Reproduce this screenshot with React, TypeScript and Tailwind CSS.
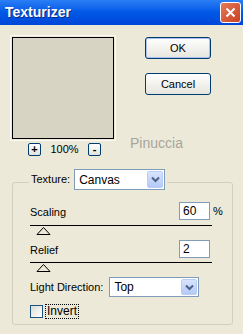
import React from 'react';

function ChevronDown() {
  return (
    <svg width="9" height="7" viewBox="0 0 9 7" aria-hidden="true">
      <path d="M1 1.5 L4.5 5 L8 1.5" fill="none" stroke="#4d6185" strokeWidth="2" />
    </svg>
  );
}

function Combo({ value, width, height }: { value: string; width: string; height: string }) {
  return (
    <div className={`${width} ${height} bg-white border border-[#7f9db9] flex items-center justify-between p-[1px]`}>
      <span className="pl-[3px] text-[12px] leading-none">{value}</span>
      <div className="w-[16px] h-full rounded-[2px] bg-gradient-to-b from-[#d8e4fd] to-[#b3c9f7] border border-[#b9cdf7] flex items-center justify-center">
        <ChevronDown />
      </div>
    </div>
  );
}

function Slider() {
  return (
    <div className="mt-[4px]">
      <div className="w-[182px] h-[1px] bg-black" />
      <svg width="15" height="9" viewBox="0 0 15 9" className="ml-[6px] mt-[1px] block" aria-hidden="true">
        <polygon points="7.5,0.5 14,7.5 1,7.5" fill="#ece9d8" stroke="#000" strokeWidth="1" />
      </svg>
    </div>
  );
}

function ZoomButton({ sign }: { sign: string }) {
  return (
    <div className="w-[13px] h-[13px] rounded-[2px] border border-[#003c74] bg-gradient-to-b from-white to-[#e3e2da] flex items-center justify-center text-[11px] leading-none font-bold">
      {sign}
    </div>
  );
}

export default function App() {
  return (
    <div className="w-[243px] h-[334px] bg-[#ece9d8] overflow-hidden text-[11px] text-black font-['Liberation_Sans',Arial,sans-serif]">
      {/* Title bar */}
      <div className="h-[25px] flex items-center justify-between pl-[5px] pr-[2px] bg-gradient-to-b from-[#2a7ef5] via-[#0058e6] to-[#0046d9]">
        <span className="text-white font-bold text-[14px] [text-shadow:1px_1px_0_#0a2b8a]">Texturizer</span>
        <div className="w-[21px] h-[21px] rounded-[3px] border border-white bg-gradient-to-br from-[#e6775a] to-[#c9401c] flex items-center justify-center">
          <svg width="11" height="11" viewBox="0 0 11 11" aria-hidden="true">
            <path d="M1.5 1.5 L9.5 9.5 M9.5 1.5 L1.5 9.5" stroke="white" strokeWidth="2" />
          </svg>
        </div>
      </div>

      <div className="px-[12px]">
        <div className="flex">
          {/* Preview */}
          <div className="w-[102px] flex flex-col">
            <div className="mt-[12px] w-[102px] h-[102px] border border-black bg-[#d7d4c4] outline outline-1 outline-offset-1 outline-[#faf9f4]" />
            <div className="mt-[4px] flex items-center">
              <div className="ml-[16px]"><ZoomButton sign="+" /></div>
              <span className="w-[47px] text-center text-[11px] leading-none">100%</span>
              <ZoomButton sign="-" />
            </div>
          </div>

          {/* Buttons */}
          <div className="ml-[16px] flex flex-col">
            <button className="mt-[12px] ml-[15px] w-[66px] h-[22px] rounded-[3px] border border-[#003c74] bg-gradient-to-b from-white to-[#e6e5dd] shadow-[inset_0_0_0_1px_#a9c3ef] text-[11px]">
              OK
            </button>
            <button className="mt-[14px] ml-[15px] w-[66px] h-[22px] rounded-[3px] border border-[#003c74] bg-gradient-to-b from-white to-[#e6e5dd] text-[11px]">
              Cancel
            </button>
            <span className="mt-[40px] text-[14px] leading-[16px] text-[#a6a59e]">Pinuccia</span>
          </div>
        </div>

        {/* Group box */}
        <div className="mt-[26px] w-[221px] border border-[#d0d0bf] rounded-[3px] pl-[17px] pb-[5px]">
          <div className="-mt-[14px] ml-[-1px] w-fit bg-[#ece9d8] px-[2px] flex items-center gap-[4px]">
            <span>Texture:</span>
            <Combo value="Canvas" width="w-[91px]" height="h-[21px]" />
          </div>

          <div className="mt-[12px] w-[193px] flex items-center">
            <span className="flex-1 pt-[2px]">Scaling</span>
            <div className="w-[31px] h-[18px] bg-white border border-[#7f9db9] pl-[3px] text-[12px] leading-[16px]">60</div>
            <span className="w-[10px] ml-[3px]">%</span>
          </div>
          <Slider />

          <div className="mt-[4px] w-[193px] flex items-center">
            <span className="flex-1 pt-[2px]">Relief</span>
            <div className="w-[31px] h-[18px] bg-white border border-[#7f9db9] pl-[3px] text-[12px] leading-[16px]">2</div>
            <span className="w-[10px] ml-[3px]" />
          </div>
          <Slider />

          <div className="mt-[4px] flex items-center gap-[6px]">
            <span>Light Direction:</span>
            <Combo value="Top" width="w-[90px]" height="h-[20px]" />
          </div>

          <div className="mt-[7px] flex items-center gap-[2px]">
            <div className="w-[13px] h-[13px] border border-[#1c5180] bg-gradient-to-br from-[#dcdcd5] to-white" />
            <span className="border border-dotted border-black px-[1px] leading-[13px] text-[12px]">Invert</span>
          </div>
        </div>
      </div>
    </div>
  );
}
